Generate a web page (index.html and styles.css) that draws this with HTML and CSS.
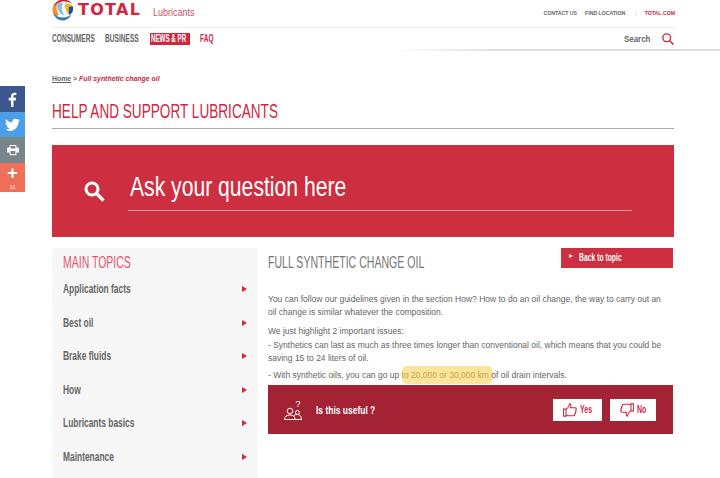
FILE: index.html
```html
<!DOCTYPE html>
<html lang="en">
<head>
	<meta charset="UTF-8">
	<title>Full synthetic change oil</title>
	<link rel="stylesheet" href="styles.css">
</head>
<body>
	<div class="share">
		<a class="fb" href="#"><svg width="12" height="15" viewBox="2 0 11 16"><path fill="#fff" d="M8 16V9h2.400l.4-2.800H8V4.600c0-.8.3-1.300 1.400-1.300H11V.8C10.700.8 9.900.7 9 .7 6.900.7 5.400 2 5.400 4.300v1.900H3V9h2.400v7z"/></svg></a>
		<a class="tw" href="#"><svg width="15" height="13" viewBox="0 0 16 14"><path fill="#fff" d="M16 2.300c-.6.3-1.200.4-1.900.5.700-.4 1.200-1 1.400-1.800-.6.400-1.300.7-2.100.8C12.800 1.100 12 .7 11 .7 9.200.7 7.700 2.200 7.700 4c0 .3 0 .5.100.8C5.100 4.600 2.600 3.300 1.100 1.300.8 1.800.7 2.400.7 3c0 1.100.6 2.200 1.500 2.800-.5 0-1-.2-1.500-.4 0 1.600 1.100 2.900 2.600 3.200-.5.100-1 .2-1.500.100.400 1.300 1.600 2.300 3.100 2.300C3.700 12 2 12.700.1 12.500c1.500.9 3.200 1.500 5 1.500 6 0 9.300-5 9.300-9.300V4.300c.6-.5 1.200-1.200 1.600-2z"/></svg></a>
		<a class="pr" href="#"><svg width="12" height="11" viewBox="0 0 14 13"><path fill="#fff" fill-rule="evenodd" d="M3 0h8v3h2a1 1 0 0 1 1 1v5h-3v3H3V9H0V4a1 1 0 0 1 1-1h2zm1.200 1.200V4h5.600V1.200zm0 6v3.600h5.600V7.200z"/></svg></a>
		<a class="plus" href="#"><span class="plus-sign">+</span><span class="count">11</span></a>
	</div>

	<div class="top">
		<div class="logo-row">
			<svg class="logo-mark" width="22" height="22" viewBox="0 0 22 22">
				<circle cx="11" cy="11" r="10.500" fill="#fff"/>
				<path fill="#f0912a" d="M.5 11C.5 7 3 4 6 3 4 6 4 11 7 16 5 17 3 18 2.500 17 1 15 .5 13 .5 11z"/>
				<path fill="#d9262e" d="M1 8C3 3 7 .5 11 .5c4 0 7 1.500 9 4-3-1.500-7-2.500-11-1.500C6 3.800 3 5.500 1 8z"/>
				<path fill="#2f78bf" d="M1.500 14c3 4 8 5.500 13 4 2-.6 4-1.800 5-3-1.500 4-5 6.500-8.500 6.500-5 0-8.500-3-9.500-7.500z"/>
				<path fill="#8fbde6" d="M5 5c2-1 4-1.500 6-1-1.500 3-1.500 8 1.500 12.500C8 16 5 11 5 5z"/>
				<path fill="#f7b52c" d="M13 4.500c2 0 5 .5 7 1.500 1 2 1 4.500 0 6.500-1 1.800-2 2.800-3.500 3.500-2.500-3-4-7.500-3.500-11.500z"/>
				<path fill="#1f4f98" d="M17 8c1.500-.5 3-.5 4-.2.400 2 .2 4-1 6-.8 1-1.700 1.800-2.500 2.200C16.500 13 16.500 10.500 17 8z"/>
			</svg>
			<span class="logo-text">TOTAL</span>
			<span class="brand-sub">Lubricants</span>
			<div class="util">
				<a href="#">CONTACT US</a>
				<a href="#">FIND LOCATION</a>
				<span class="util-sep">|</span>
				<a class="red" href="#">TOTAL.COM</a>
			</div>
		</div>
		<div class="nav-row">
			<a class="nav-consumers" href="#"><span>CONSUMERS</span></a>
			<a class="nav-business" href="#"><span>BUSINESS</span></a>
			<a class="nav-news" href="#"><span>NEWS &amp; PR</span></a>
			<a class="nav-faq" href="#"><span>FAQ</span></a>
			<span class="search-link">Search</span>
			<svg class="search-small" width="12" height="12" viewBox="0 0 14 14"><circle cx="5.500" cy="5.500" r="4.500" fill="none" stroke="#d0273f" stroke-width="1.600"/><path d="M9 9l4.500 4.500" stroke="#d0273f" stroke-width="1.800"/></svg>
		</div>
	</div>
	<div class="top-shadow"></div>

	<div class="page">
		<div class="crumb"><a href="#">Home</a> &gt; <em>Full synthetic change oil</em></div>
		<h1><span>HELP AND SUPPORT LUBRICANTS</span></h1>

		<div class="hero">
			<svg width="21" height="21" viewBox="0 0 21 21"><circle cx="8" cy="8" r="6" fill="none" stroke="#fff" stroke-width="3"/><path d="M12.500 12.500l7 7" stroke="#fff" stroke-width="3.200"/></svg>
			<div class="hero-field"><span>Ask your question here</span></div>
		</div>

		<div class="cols">
			<div class="side">
				<h2><span>MAIN TOPICS</span></h2>
				<a class="topic" href="#"><span>Application facts</span></a>
				<a class="topic" href="#"><span>Best oil</span></a>
				<a class="topic" href="#"><span>Brake fluids</span></a>
				<a class="topic" href="#"><span>How</span></a>
				<a class="topic" href="#"><span>Lubricants basics</span></a>
				<a class="topic" href="#"><span>Maintenance</span></a>
			</div>
			<div class="main">
				<div class="main-head">
					<h3><span>FULL SYNTHETIC CHANGE OIL</span></h3>
					<a class="back" href="#"><span>Back to topic</span></a>
				</div>
				<div class="answer">
					<p>You can follow our guidelines given in the section How? How to do an oil change, the way to carry out an oil change is similar whatever the composition.</p>
					<p class="tight">We just highlight 2 important issues:</p>
					<p class="list">- Synthetics can last as much as three times longer than conventional oil, which means that you could be saving 15 to 24 liters of oil.</p>
					<p>- With synthetic oils, you can go up <span class="mark">to 20,000 or 30,000 km</span> of oil drain intervals.</p>
				</div>
				<div class="useful">
					<svg class="people" width="18" height="20" viewBox="0 0 18 20" fill="none" stroke="#fff" stroke-width="1"><circle cx="6" cy="11" r="2.800"/><circle cx="13.500" cy="12.500" r="2"/><path d="M.5 19.500c0-3 2-4.500 5.500-4.500s5 1.500 5 4.500zM10 15.500c1-.8 2-1 3.500-1 2.500 0 4 2 4 5H11"/><text x="11.500" y="7" fill="#fff" stroke="none" font-size="9" font-family="Liberation Sans">?</text></svg>
					<span class="useful-label"><span>Is this useful ?</span></span>
					<a class="vote" href="#"><svg width="14" height="14" viewBox="0 0 16 15" fill="none" stroke="#d0273f" stroke-width="1.200"><path d="M.5 6.500h3v8h-3zM3.500 7l3-3.500L7.500.5c1.500 0 2 1.500 1 4.500h5.500c1.500 0 1.500 2 .5 2.500.8.800.5 2-.3 2.300.5 1 0 2-.8 2.200.2 1-.4 2-1.400 2H6c-1 0-1.500-.5-2.500-.5"/></svg><span>Yes</span></a>
					<a class="vote vote-no" href="#"><svg width="14" height="14" viewBox="0 0 16 15" fill="none" stroke="#d0273f" stroke-width="1.200"><path d="M15.500 8.500h-3v-8h3zM12.500 8l-3 3.500-1 3c-1.500 0-2-1.500-1-4.500H2c-1.500 0-1.500-2-.5-2.500-.8-.8-.5-2 .3-2.300-.5-1 0-2 .8-2.200-.2-1 .4-2 1.400-2H10c1 0 1.500.5 2.500.5"/></svg><span>No</span></a>
				</div>
			</div>
		</div>
	</div>
</body>
</html>
```

FILE: styles.css
```css
*{margin:0;padding:0;box-sizing:border-box;text-decoration:none;}
html,body{height:478px;overflow:hidden;}
body{background:#fff;font-family:"Liberation Sans",Arial,sans-serif;color:#666;position:relative;}
a{color:inherit;}
.red{color:#d0273f;}

/* no condensed font here, so the narrow labels get squeezed */
h1 span,h2 span,h3 span,.hero-field span,.topic span,.back span,.useful-label span,.vote span,.nav-row a span,.brand-sub,.search-link{display:inline-block;white-space:nowrap;transform-origin:left center;}

.share{position:absolute;left:0;top:86px;width:25px;}
.share a{display:flex;align-items:center;justify-content:center;color:#fff;}
.fb{background:#3d5690;height:26px;}
.tw{background:#4a9fe8;height:25px;}
.pr{background:#78868a;height:26px;}
.share .plus{background:#ef6f58;height:29px;flex-direction:column;line-height:1;}
.plus-sign{font-size:18px;font-weight:bold;height:15px;line-height:15px;}
.count{font-size:6px;margin-top:3px;opacity:.8;}

.top{padding:0 45px 0 52px;}
.logo-row{display:flex;align-items:center;height:28px;border-bottom:1px solid #eee;}
.logo-mark{margin-top:-8px;margin-right:4px;}
.logo-text{font-family:"DejaVu Sans",sans-serif;font-weight:bold;font-size:16px;letter-spacing:1.300px;color:#d0273f;margin-top:-8px;width:75px;}
.brand-sub{font-size:10px;color:#d0506a;margin-top:-3px;transform:scaleX(.9);}
.util{margin-left:auto;display:flex;gap:8px;font-size:5.200px;font-weight:bold;color:#666;margin-top:-2px;}
.util-sep{color:#bbb;font-weight:normal;margin:0 0 0 2px;}
.nav-row{display:flex;align-items:center;height:21px;font-size:10px;font-weight:bold;color:#666;}
.nav-row a{display:block;white-space:nowrap;line-height:12px;}
.nav-row a span{transform:scaleX(.66);}
.nav-consumers{width:53px;}
.nav-business{width:45px;}
.nav-row .nav-news{width:40px;background:#d0273f;color:#fff;padding-left:1px;margin-right:10px;}
.nav-row .nav-news span{transform:scaleX(.62);}
.nav-faq{width:14px;color:#d0273f;}
.search-link{margin-left:auto;width:26px;font-size:9px;margin-right:12px;transform:scaleX(.88);}
.search-small{margin-right:1px;}
.top-shadow{height:2px;background:linear-gradient(to right,#fff 55%,#ddd 70%,#ddd);}

.page{padding:0 46px 0 52px;}
.crumb{margin-top:23px;font-size:7.500px;font-weight:bold;height:10px;line-height:10px;transform:scaleX(.92);transform-origin:left center;}
.crumb a{text-decoration:underline;}
.crumb em{color:#d0273f;}
h1{font-weight:normal;font-size:20px;color:#d0273f;margin-top:14px;height:31px;line-height:27px;border-bottom:1px solid #aaa;}
h1 span{transform:scaleX(.68);}
.hero{margin-top:16px;height:92px;background:#cd2f40;display:flex;align-items:center;padding-left:32px;}
.hero-field{width:504px;margin-left:23px;margin-top:2px;height:38px;padding-left:2px;border-bottom:1px solid #e59aa2;font-size:28px;color:#fff;line-height:28px;}
.hero-field span{transform:scaleX(.755);}

.cols{display:flex;margin-top:11px;gap:10px;}
.side{width:206px;height:240px;background:#f7f7f7;padding:0 11px;}
h2{font-weight:normal;font-size:16px;color:#e2566f;padding-top:6px;height:29px;line-height:18px;}
h2 span{transform:scaleX(.655);}
.topic{display:block;position:relative;height:33.500px;line-height:25px;font-size:12px;font-weight:bold;color:#666;}
.topic span{transform:scaleX(.7);}
.topic::after{content:"";position:absolute;right:0;top:9px;border-left:5px solid #d0273f;border-top:3px solid transparent;border-bottom:3px solid transparent;}

.main{flex:none;width:405px;}
.main-head{display:flex;justify-content:space-between;height:36px;}
h3{font-weight:normal;font-size:16px;color:#777;line-height:30px;}
h3 span{transform:scaleX(.66);}
.back{display:block;width:112px;height:20px;background:#cd2f40;color:#fff;font-weight:bold;font-size:10px;line-height:20px;padding-left:18px;position:relative;}
.back span{transform:scaleX(.68);}
.back::before{content:"";position:absolute;left:8px;top:6px;border-left:4px solid #fff;border-top:2.500px solid transparent;border-bottom:2.500px solid transparent;}
.answer{width:454px;height:92px;font-size:9.600px;line-height:13px;color:#666;margin-top:8px;transform:scaleX(.885);transform-origin:left top;}
.answer p{margin-bottom:6px;}
.answer .tight{margin-bottom:1px;}
.answer .list{margin-bottom:4px;}
.mark{background:#fbe59a;color:#c8a452;border-radius:6px;padding:3px 4px 4px 0;margin-right:-4px;}
.useful{margin-top:1px;height:49px;background:#a32335;display:flex;align-items:center;padding:0 17px 0 16px;}
.people{margin-right:14px;margin-top:1px;}
.useful-label{flex:1;color:#fff;font-weight:bold;font-size:11px;}
.useful-label span{transform:scaleX(.77);}
.vote{display:flex;align-items:center;gap:3px;width:49px;height:22px;padding-left:10px;background:#fff;color:#d0273f;font-weight:bold;font-size:10px;white-space:nowrap;}
.vote span{transform:scaleX(.7);}
.vote-no{width:46px;margin-left:8px;}
```
